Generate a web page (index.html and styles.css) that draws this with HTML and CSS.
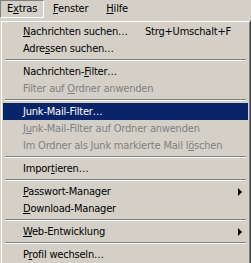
FILE: index.html
```html
<!DOCTYPE html>
<html lang="de">
<head>
    <meta charset="UTF-8">
    <title>Extras</title>
    <link rel="stylesheet" href="styles.css">
</head>
<body>
    <div class="menubar">
        <span class="top open">E<u>x</u>tras</span>
        <span class="top"><u>F</u>enster</span>
        <span class="top"><u>H</u>ilfe</span>
    </div>

    <div class="popup">
        <div class="item"><span><u>N</u>achrichten suchen…</span><span class="key">Strg+Umschalt+F</span></div>
        <div class="item"><span>Adre<u>s</u>sen suchen…</span></div>
        <div class="sep"></div>
        <div class="item"><span>Nachrichten-<u>F</u>ilter…</span></div>
        <div class="item disabled"><span>Filter auf <u>O</u>rdner anwenden</span></div>
        <div class="sep"></div>
        <div class="item active"><span><u>J</u>unk-Mail-Filter…</span></div>
        <div class="item disabled"><span>J<u>u</u>nk-Mail-Filter auf Ordner anwenden</span></div>
        <div class="item disabled"><span>Im Ordner als Junk markierte Mail l<u>ö</u>schen</span></div>
        <div class="sep"></div>
        <div class="item"><span>Impor<u>t</u>ieren…</span></div>
        <div class="sep"></div>
        <div class="item sub"><span><u>P</u>asswort-Manager</span></div>
        <div class="item"><span><u>D</u>ownload-Manager</span></div>
        <div class="sep"></div>
        <div class="item sub"><span><u>W</u>eb-Entwicklung</span></div>
        <div class="sep"></div>
        <div class="item"><span>P<u>r</u>ofil wechseln…</span></div>
    </div>
</body>
</html>
```

FILE: styles.css
```css
* {
    margin: 0;
    padding: 0;
    box-sizing: border-box;
}

body {
    background: #d4d0c8;
    color: #000;
    font-family: "DejaVu Sans Condensed", "DejaVu Sans", sans-serif;
    font-size: 11px;
    letter-spacing: -0.2px;
    overflow: hidden;
    width: 251px;
    height: 263px;
}

/* Menüleiste */
.menubar {
    display: flex;
    height: 20px;
}

.top {
    height: 18px;
    line-height: 16px;
    padding: 0 8px;
    border: 1px solid transparent;
}

.top.open {
    padding: 0 6px;
    border-color: #808080 #fff #fff #808080;
}

/* Aufgeklapptes Menü */
.popup {
    width: 251px;
    border: 1px solid;
    border-color: #d4d0c8 #404040 #404040 #d4d0c8;
    box-shadow: inset 1px 1px #fff, inset -1px -1px #808080;
    padding: 2px;
}

.item {
    position: relative;
    display: grid;
    grid-template-columns: 122px 1fr;
    align-items: center;
    height: 17px;
    padding-left: 20px;
    white-space: nowrap;
}

.item.disabled {
    color: #808080;
}

.item.active {
    background: #0a246a;
    color: #fff;
}

.sub::after {
    content: "";
    position: absolute;
    right: 6px;
    top: 5px;
    border-left: 4px solid #000;
    border-top: 4px solid transparent;
    border-bottom: 4px solid transparent;
}

.sep {
    height: 6px;
    padding: 2px 2px 0;
}

.sep::before {
    content: "";
    display: block;
    border-top: 1px solid #808080;
    border-bottom: 1px solid #fff;
}
```
